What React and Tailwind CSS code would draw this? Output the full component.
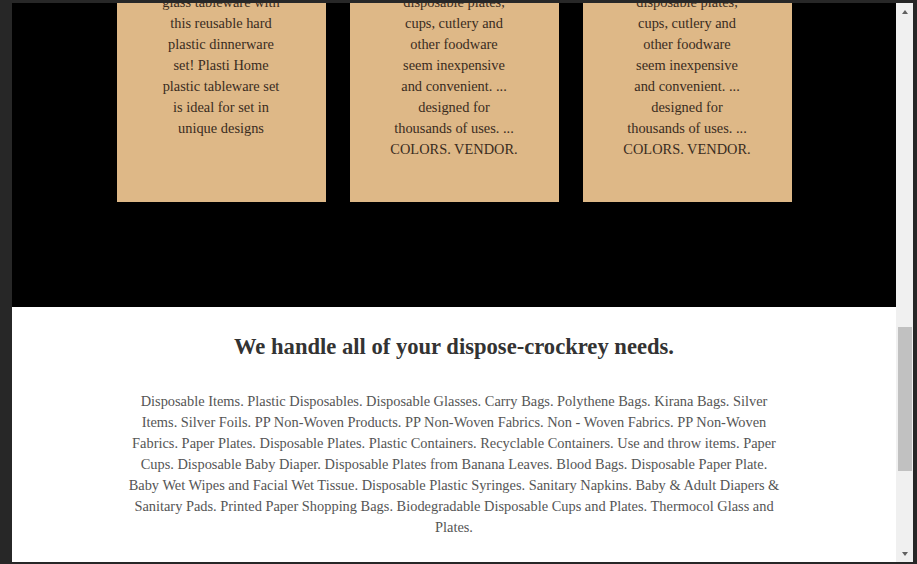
import React from 'react';

const cards = [
  [
    'Replace your breakable',
    'glass tableware with',
    'this reusable hard',
    'plastic dinnerware',
    'set! Plasti Home',
    'plastic tableware set',
    'is ideal for set in',
    'unique designs',
  ],
  [
    'Made to last while',
    'disposable plates,',
    'cups, cutlery and',
    'other foodware',
    'seem inexpensive',
    'and convenient. ...',
    'designed for',
    'thousands of uses. ...',
    'COLORS. VENDOR.',
  ],
  [
    'Made to last while',
    'disposable plates,',
    'cups, cutlery and',
    'other foodware',
    'seem inexpensive',
    'and convenient. ...',
    'designed for',
    'thousands of uses. ...',
    'COLORS. VENDOR.',
  ],
];

const items = [
  'Disposable Items. Plastic Disposables. Disposable Glasses. Carry Bags. Polythene Bags. Kirana Bags. Silver',
  'Items. Silver Foils. PP Non-Woven Products. PP Non-Woven Fabrics. Non - Woven Fabrics. PP Non-Woven',
  'Fabrics. Paper Plates. Disposable Plates. Plastic Containers. Recyclable Containers. Use and throw items. Paper',
  'Cups. Disposable Baby Diaper. Disposable Plates from Banana Leaves. Blood Bags. Disposable Paper Plate.',
  'Baby Wet Wipes and Facial Wet Tissue. Disposable Plastic Syringes. Sanitary Napkins. Baby & Adult Diapers &',
  'Sanitary Pads. Printed Paper Shopping Bags. Biodegradable Disposable Cups and Plates. Thermocol Glass and',
  'Plates.',
];

export default function App() {
  return (
    <div className="w-[917px] h-[564px] bg-[#272727] pl-[12px] pt-[3px] pr-[4px] pb-[2px] flex overflow-hidden" style={{ fontFamily: '"Liberation Serif", serif' }}>
      {/* page viewport, scrolled down a bit */}
      <div className="flex-1 h-full overflow-hidden">
        <div className="-mt-[54px]">
          <section className="bg-black pt-[20px] pb-[105px]">
            <div className="flex justify-center gap-[24px]">
              {cards.map((lines, i) => (
                <div key={i} className="w-[209px] bg-[#deb887] px-[20px] pt-[2px] pb-[42px] text-center text-[14.4px] leading-[21px] text-[#3a2c1e]">
                  {lines.map((l, j) => (
                    <p key={j} className="whitespace-nowrap">{l}</p>
                  ))}
                </div>
              ))}
            </div>
          </section>

          <section className="bg-white pt-[23px] pb-[40px] text-center">
            <h2 className="text-[22.6px] font-bold text-[#333]">We handle all of your dispose-crockrey needs.</h2>
            <p className="mx-auto mt-[27px] w-[700px] text-[14.4px] leading-[21px] text-[#555]">
              {items.map((l, i) => (
                <React.Fragment key={i}>
                  {l}
                  {i < items.length - 1 && <br />}
                </React.Fragment>
              ))}
            </p>
          </section>
        </div>
      </div>

      {/* scrollbar */}
      <div className="w-[17px] h-full bg-[#f0f0f0] flex flex-col items-center">
        <div className="h-[17px] flex items-center justify-center">
          <div className="w-0 h-0 border-l-[3px] border-r-[3px] border-b-[4px] border-l-transparent border-r-transparent border-b-[#606060]" />
        </div>
        <div className="mt-[307px] w-[14px] h-[144px] bg-[#c1c1c1]" />
        <div className="flex-1" />
        <div className="h-[17px] flex items-center justify-center">
          <div className="w-0 h-0 border-l-[3px] border-r-[3px] border-t-[4px] border-l-transparent border-r-transparent border-t-[#606060]" />
        </div>
      </div>
    </div>
  );
}
